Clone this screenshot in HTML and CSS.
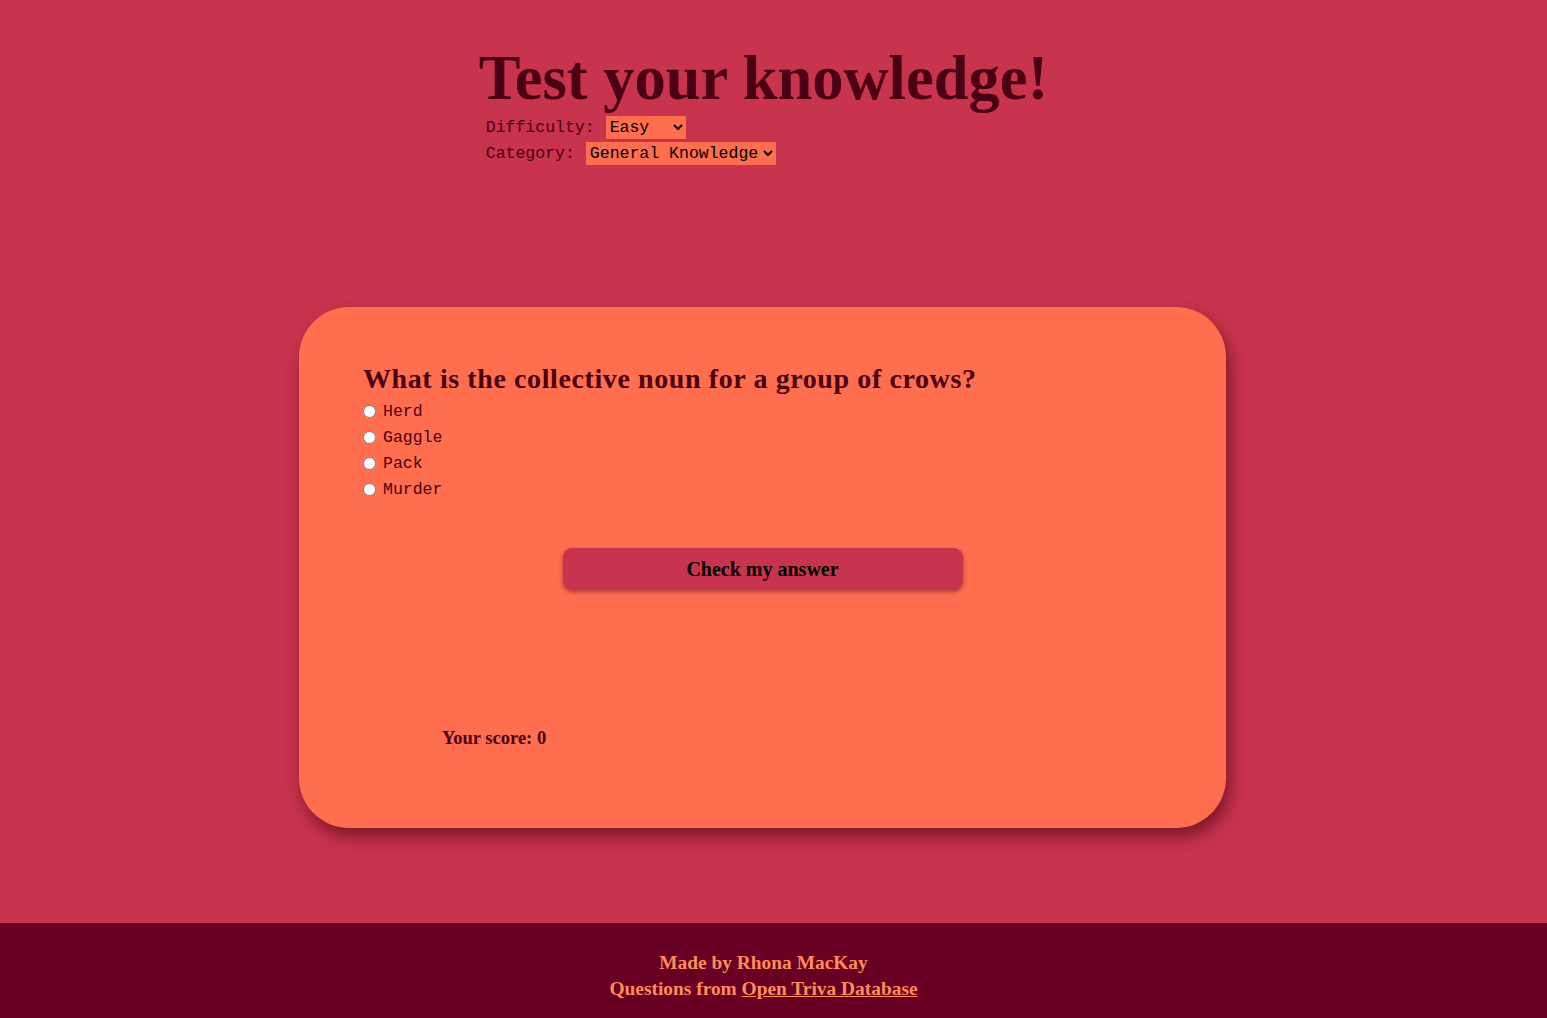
FILE: index.html
```html
<!DOCTYPE html>
<html lang="en">
<head>
<meta charset="utf-8">
<title>Trivia</title>
<link rel="stylesheet" href="styles.css">
</head>
<body>
<div class="page">
  <header class="header">
    <h1 class="title">Test your knowledge!</h1>
    <div class="controls">
      <div class="control-row">
        <label class="control-label" for="difficulty">Difficulty:</label>
        <select id="difficulty" class="select select-difficulty">
          <option>Easy</option>
          <option>Medium</option>
          <option>Hard</option>
        </select>
      </div>
      <div class="control-row">
        <label class="control-label" for="category">Category:</label>
        <select id="category" class="select select-category">
          <option>General Knowledge</option>
          <option>Science &amp; Nature</option>
          <option>History</option>
        </select>
      </div>
    </div>
  </header>

  <main class="card">
    <h2 class="question">What is the collective noun for a group of crows?</h2>
    <div class="options">
      <label class="option"><input type="radio" name="answer" class="radio"><span>Herd</span></label>
      <label class="option"><input type="radio" name="answer" class="radio"><span>Gaggle</span></label>
      <label class="option"><input type="radio" name="answer" class="radio"><span>Pack</span></label>
      <label class="option"><input type="radio" name="answer" class="radio"><span>Murder</span></label>
    </div>
    <div class="actions">
      <button class="check-btn" type="button">Check my answer</button>
    </div>
    <p class="score">Your score: 0</p>
  </main>
</div>

<footer class="footer">
  <div class="footer-inner">
    <p class="footer-line">Made by Rhona MacKay</p>
    <p class="footer-line">Questions from <a class="footer-link" href="#">Open Triva Database</a></p>
  </div>
</footer>
</body>
</html>
```

FILE: styles.css
```css
html, body {
  margin: 0;
  padding: 0;
}

body {
  background: #c8334d;
  font-family: "Liberation Serif", "Times New Roman", serif;
  color: #4a0012;
}

.page {
  padding-right: 20px;
  padding-bottom: 95px;
}

.header {
  width: fit-content;
  margin: 0 auto;
  padding-top: 43px;
}

.title {
  margin: 0 0 1px 0;
  font-size: 62.5px;
  line-height: 70px;
  font-weight: 700;
  color: #4a0012;
}

.controls {
  padding-left: 7px;
  display: flex;
  flex-direction: column;
}

.control-row {
  display: flex;
  align-items: center;
  height: 26px;
  font-family: "Liberation Mono", "DejaVu Sans Mono", monospace;
  font-size: 16.5px;
}

.control-label {
  color: #4a0012;
  margin-right: 11px;
}

.select {
  font-family: "Liberation Mono", "DejaVu Sans Mono", monospace;
  font-size: 16.5px;
  color: #000;
  background-color: #ff6e4e;
  border: none;
  border-radius: 0;
  height: 23px;
  padding: 0;
  margin: 0;
}

.select-difficulty {
  width: 80px;
}

.select-category {
  width: 190px;
}

.card {
  width: 927px;
  box-sizing: border-box;
  margin: 141px auto 0;
  position: relative;
  left: -1px;
  background: #ff6e4e;
  border-radius: 50px;
  padding: 57px 64px 80px;
  box-shadow: 4px 9px 16px rgba(70, 0, 15, 0.55);
}

.question {
  margin: 0 0 4px 0;
  font-size: 28px;
  line-height: 30px;
  letter-spacing: 0.6px;
  font-weight: 700;
  color: #4a0012;
}

.options {
  display: flex;
  flex-direction: column;
}

.option {
  display: flex;
  align-items: center;
  height: 26px;
  font-family: "Liberation Mono", "DejaVu Sans Mono", monospace;
  font-size: 16.5px;
  color: #4a0012;
}

.radio {
  width: 13px;
  height: 13px;
  margin: 0 7px 0 0;
}

.actions {
  display: flex;
  justify-content: center;
  margin-top: 46px;
}

.check-btn {
  width: 400px;
  height: 42px;
  border: none;
  border-radius: 9px;
  background: #c8334d;
  color: #000;
  font-family: "Liberation Serif", "Times New Roman", serif;
  font-size: 20px;
  font-weight: 700;
  box-shadow: 0 2px 4px rgba(70, 0, 15, 0.45);
  cursor: pointer;
}

.score {
  margin: 138px 0 0 79px;
  font-size: 18.5px;
  line-height: 20px;
  font-weight: 700;
  color: #4a0012;
}

.footer {
  background: #680024;
  height: 95px;
  box-sizing: border-box;
  padding: 27px 20px 0 0;
}

.footer-inner {
  text-align: center;
}

.footer-line {
  margin: 0;
  font-size: 19.4px;
  line-height: 26px;
  font-weight: 700;
  color: #ff8c5a;
}

.footer-link {
  color: #ff8c5a;
  text-decoration: underline;
}
```
